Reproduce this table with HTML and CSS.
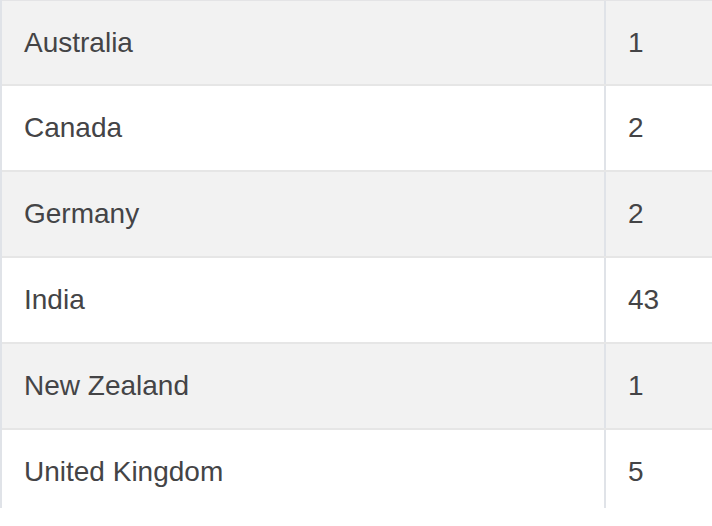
FILE: index.html
```html
<!DOCTYPE html>
<html>
<head>
<meta charset="utf-8">
<link rel="stylesheet" href="styles.css">
</head>
<body>
<div class="frame">
  <div class="table">
    <div class="row alt first"><div class="cell name">Australia</div><div class="cell count">1</div></div>
    <div class="row"><div class="cell name">Canada</div><div class="cell count">2</div></div>
    <div class="row alt"><div class="cell name">Germany</div><div class="cell count">2</div></div>
    <div class="row"><div class="cell name">India</div><div class="cell count">43</div></div>
    <div class="row alt"><div class="cell name">New Zealand</div><div class="cell count">1</div></div>
    <div class="row"><div class="cell name">United Kingdom</div><div class="cell count">5</div></div>
  </div>
</div>
</body>
</html>
```

FILE: styles.css
```css
html, body {
  margin: 0;
  padding: 0;
  background: #ffffff;
}
.frame {
  height: 508px;
  overflow: hidden;
}
.table {
  width: 800px;
  border-left: 2px solid #e0e3e8;
  font-family: "Liberation Sans", Arial, sans-serif;
  font-size: 28px;
  color: #444446;
}
.row {
  display: flex;
  height: 84px;
  border-bottom: 2px solid #e6e6e6;
  background: #ffffff;
}
.row.first {
  height: 83px;
  border-top: 1px solid #e4e4e6;
}
.row.alt {
  background: #f2f2f2;
}
.cell {
  display: flex;
  align-items: center;
  box-sizing: border-box;
}
.name {
  width: 604px;
  padding-left: 22px;
  border-right: 2px solid #e0e3e8;
}
.count {
  flex: 1;
  padding-left: 22px;
}
```
